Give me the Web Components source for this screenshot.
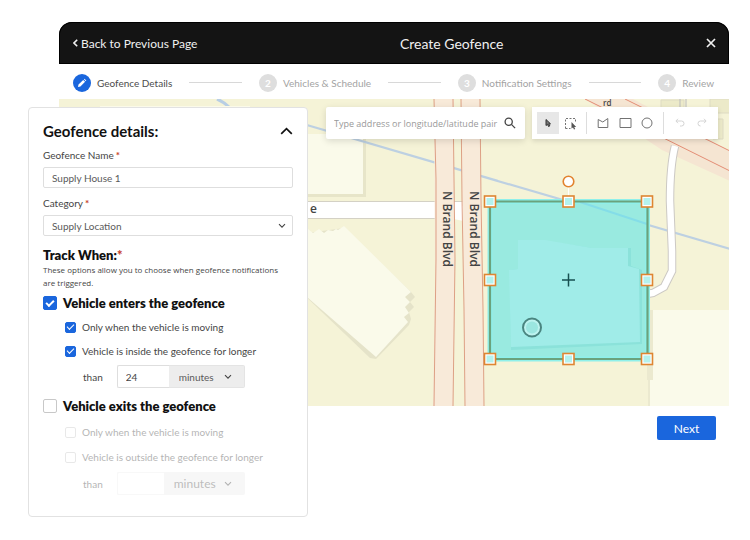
<!DOCTYPE html>
<html lang="en">
<head>
<meta charset="utf-8">
<meta name="viewport" content="width=device-width, initial-scale=1">
<title>Create Geofence</title>
<style>
  :root {
    --blue: #1a66dd;
    --ink: #454545;
    --muted: #a3a3a3;
    --line: #dedede;
    --red: #c8411f;
  }
  body { margin: 0; background: #fff; color: var(--ink); font-family: Lato, "Open Sans", sans-serif; font-size: 10px; }
</style>
</head>
<body>
<geofence-page></geofence-page>

<script>
const BASE = `<style>
  *, *::before { box-sizing: border-box; }
  input, select, button { font: inherit; color: inherit; margin: 0; }
  button { padding: 0; border: 0; background: none; cursor: pointer; }
  svg { display: block; fill: none; stroke: currentColor; }
</style>`;

function define(name, markup) {
  const template = document.createElement('template');
  customElements.define(name, class extends HTMLElement {
    constructor() {
      super();
      template.innerHTML = BASE + (typeof markup === 'function' ? markup(this) : markup);
      this.attachShadow({ mode: 'open' }).append(template.content.cloneNode(true));
    }
  });
}

define('page-header', `
<style>
  :host { display: flex; align-items: center; justify-content: space-between; height: 42px; padding: 0 13px 0 14px;
    background: #141414; color: #f0f0f0; border-radius: 13px 13px 0 0; box-shadow: inset 0 0 0 1px #000; }
  a { display: flex; align-items: center; gap: 3px; color: inherit; text-decoration: none; font-size: 12px; }
  h1 { margin: 0; font-size: 14px; font-weight: 400; }
</style>
<a href="#back"><svg width="5" height="8" viewBox="0 0 5 8" stroke-width="1.6"><path d="M4.2.8 1 4l3.2 3.2"/></svg>Back to Previous Page</a>
<h1>Create Geofence</h1>
<button aria-label="Close"><svg width="10" height="10" viewBox="0 0 10 10" stroke-width="1.7"><path d="m1 1 8 8M9 1 1 9"/></svg></button>
`);

define('step-item', `
<style>
  :host { display: flex; align-items: center; gap: 6px; color: var(--muted); white-space: nowrap; }
  :host([current]) { color: #4c4c4c; }
  .dot { display: grid; place-items: center; width: 18px; height: 18px; border-radius: 50%; background: #dedede; color: #fff; font-weight: 700; }
  :host([current]) .dot { background: var(--blue); }
</style>
<span class="dot"><slot name="mark"></slot></span><slot></slot>
`);

define('step-track', `
<style>
  :host { display: flex; align-items: center; gap: 17px; height: 35px; padding: 2px 15px 0 14px; background: #fff; }
  i { flex: 1; height: 1px; background: #d8d8d8; }
</style>
<step-item current><svg slot="mark" width="10" height="10" viewBox="0 0 10 10"><path d="M1 9l.5-2.4L6.2 1.9l1.9 1.9-4.7 4.7zM6.9 1.3l.6-.5 1.8 1.7-.6.7z" fill="#fff" stroke="none"/></svg>Geofence Details</step-item>
<i></i>
<step-item><span slot="mark">2</span>Vehicles &amp; Schedule</step-item>
<i></i>
<step-item><span slot="mark">3</span>Notification Settings</step-item>
<i></i>
<step-item><span slot="mark">4</span>Review</step-item>
`);

const handle = (x, y) => `<rect x="${x - 5.5}" y="${y - 5.5}" width="11" height="11" fill="#fff" stroke="#de8632" stroke-width="1.6"/><rect x="${x - 3.5}" y="${y - 3.5}" width="7" height="7" fill="#b4f2ee" stroke="none"/>`;

define('geofence-map', `
<style>
  :host { display: block; background: #f5f3d7; overflow: hidden; }
  svg { width: 100%; height: 100%; stroke: none; }
  text { fill: #444; font: 600 12px "Open Sans", sans-serif; }
  .small { font-size: 8px; }
</style>
<svg viewBox="59 99 670 307" preserveAspectRatio="xMaxYMin slice" role="img" aria-label="Map">
  <path d="M217 99q7 3 12 8" stroke="#b8cee4" stroke-width="3"/>
  <path d="M100 106h150v10H100z" fill="#fbfae9"/>
  <path d="M300 134h66v63h-66z" fill="#e7e5c9"/>
  <path d="M300 134h63v60h-63z" fill="#fafaea"/>
  <path d="M300 123 730 249" stroke="#bdd0e2" stroke-width="2.2"/>
  <path d="M300 234l44-6 67 64 4 5-5 5 4 5-5 5 2 7-2 6-33 34-6-1-70-67z" fill="#e5e3c9"/>
  <path d="M300 235l8-6 5 4 6-4 5 4 4-3 5 1 3-2 2 1 6-4 67 66-6 5 5 5-5 5 4 6-5 4 4 5-32 35-76-66z" fill="#fafaea"/>
  <path d="M300 201.5H465v17H300z" fill="#fff" stroke="#d4d1c5"/>
  <path d="M434 99h20v110l1 70-2 127h-20l2-127z" fill="#f8ead9"/>
  <path d="M461 99h19l1 100 2 110 1 97h-19l-1-110-2-110z" fill="#f8ead9"/>
  <path d="M454 204l9 2v15l-9-2z" fill="#fff"/>
  <path d="M434 99l2 80v80l-2 147M453 99l1 80 1 80-2 147M461 99l1 100 2 110 1 97M480 99l1 100 2 110 1 97" fill="none" stroke="#dda085"/>
  <path d="M585 99h48l97 52v30l-68-31z" fill="#f5e5d2"/>
  <path d="M585 99 730 171M625 99 730 151" stroke="#e38d75"/>
  <path d="M661 100h23v25h-23zM710 99h20v14h-20zM713 119h10v20h-10z" fill="#eceac9" stroke="#dedbc3"/>
  <path d="M680 99v10M686 99v10" stroke="#bbb"/>
  <path d="M675 146q-5 20-5 55l2 50v20l-8 16-11 6-12 2" fill="none" stroke="#ccc9c4" stroke-width="8.5"/>
  <path d="M675 146q-5 20-5 55l2 50v20l-8 16-11 6-12 2" fill="none" stroke="#fff" stroke-width="6.5"/>
  <path d="M648 406v-26h-1v-70h84v97z" fill="#ebe9cf"/>
  <path d="M650 406v-26h3V310h78v96z" fill="#fafaea"/>
  <text class="small" x="603" y="106">rd</text>
  <text x="310" y="213">e</text>
  <text transform="translate(443 191) rotate(90)">N Brand Blvd</text>
  <text transform="translate(470 191) rotate(90)">N Brand Blvd</text>

  <path d="M490 201.5h157.500v157.500H490z" fill="#99eae0" stroke="#8ff0ea" stroke-width="5"/>
  <path d="M511 350l-1-80 8-1v-27l28-1 46 7 39 0v18l11 4v74z" fill="#8be2da"/>
  <path d="M511 347l-2-77 9-1v-29h27l47 8h36v18l11 3 1 73z" fill="#a0ece8"/>
  <path d="M580 202l67 22" stroke="#84dde8" stroke-width="2"/>
  <path d="M490 201.500h157.500v157.500H490z" fill="none" stroke="#6ba27c" stroke-width="2.200"/>
  <path d="M568.500 187v9" stroke="#fff"/>
  <circle cx="568.500" cy="181.500" r="5.300" fill="#fff" stroke="#e28330" stroke-width="1.600"/>
  ${[[490,201.5],[568.5,201.5],[647,201.5],[490,280],[647,280],[490,359],[568.5,359],[647,359]].map(p => handle(...p)).join('')}
  <path d="M568.500 273.500v13M562 280h13" stroke="#174f50" stroke-width="1.500"/>
  <circle cx="532" cy="327.500" r="9" fill="#bdf3ef" stroke="#4a8580" stroke-width="2"/>
  <circle cx="532" cy="327.500" r="6" fill="#9be6e0"/>
</svg>
`);

define('map-search', `
<style>
  :host { display: flex; align-items: center; width: 199px; height: 32px; padding: 0 9px 0 8px; background: #fff; border-radius: 2px; box-shadow: 0 2px 7px #0002; }
  input { flex: 1; min-width: 0; border: 0; padding: 0; outline: 0; background: none; font: 9px "Open Sans", sans-serif; }
  input::placeholder { color: #999; opacity: 1; }
  button { color: #444; }
</style>
<input type="text" aria-label="Search address" placeholder="Type address or longitude/latitude pair">
<button aria-label="Search"><svg width="12" height="12" viewBox="0 0 12 12" stroke-width="1.3"><circle cx="4.700" cy="4.700" r="3.600"/><path d="m7.400 7.400 3.700 3.700"/></svg></button>
`);

define('map-toolbar', `
<style>
  :host { display: flex; align-items: center; height: 32px; padding: 0 5px; background: #fff; box-shadow: 0 2px 5px #0002; color: #727272; }
  button { display: grid; place-items: center; width: 22px; height: 22px; }
  button[aria-pressed=true] { background: #e7e7e7; color: #333; }
  button:disabled { color: #d4d4d4; }
  i { width: 1px; height: 22px; margin: 0 5px; background: #ddd; }
</style>
<button aria-label="Select" aria-pressed="true"><svg width="12" height="12" viewBox="0 0 12 12"><path d="M4 2.500v6l1.500-1.200 1 2.200 1.300-.6-1-2.100H8.500z" fill="#777" stroke="#333"/></svg></button>
<button aria-label="Select area"><svg width="13" height="13" viewBox="0 0 13 13"><path d="M1.500 11.500v-10h10v4M1.500 11.500h5" stroke-dasharray="2 1.500"/><path d="M7.500 5v6.500l1.500-1 1 2 1.200-.6-1-1.900h2z" fill="#555" stroke="none"/></svg></button>
<i></i>
<button aria-label="Draw polygon"><svg width="12" height="12" viewBox="0 0 12 12"><path d="M1.200 2.500 5.800 5l5-3.500v9H1.200z"/></svg></button>
<button aria-label="Draw rectangle"><svg width="13" height="12" viewBox="0 0 13 12"><path d="M1 1.500h11v9H1z"/></svg></button>
<button aria-label="Draw circle"><svg width="12" height="12" viewBox="0 0 12 12"><circle cx="6" cy="6" r="5"/></svg></button>
<i></i>
<button aria-label="Undo" disabled><svg width="10" height="10" viewBox="0 0 10 10"><path d="M3 .8.900 3 3 5.200M1 3h5.500q2.500 0 2.500 2.500T6.500 8H5"/></svg></button>
<button aria-label="Redo" disabled><svg width="10" height="10" viewBox="0 0 10 10"><path d="M7 .8 9.100 3 7 5.200M9 3H3.500Q1 3 1 5.500T3.500 8"/></svg></button>
`);

const chevron = '<svg width="8" height="6" viewBox="0 0 8 6" stroke-width="1.1"><path d="m1 1.200 3 3 3-3"/></svg>';

define('form-field', el => `
<style>
  :host { display: block; }
  label { display: grid; gap: 4px; line-height: 16px; }
  b { color: var(--red); margin-left: 2px; }
  .control { display: grid; align-items: center; }
  input, select { grid-area: 1 / 1; appearance: none; width: 100%; height: 21px; padding: 0 8px; border: 1px solid var(--line); border-radius: 2px; background: #fff; color: #5a5a5a; }
  svg { grid-area: 1 / 1; justify-self: end; margin-right: 7px; pointer-events: none; }
</style>
<label><span>${el.getAttribute('label')}<b>*</b></span>
<span class="control">${el.hasAttribute('choice')
  ? `<select><option>${el.getAttribute('value')}</option></select>${chevron}`
  : `<input type="text" value="${el.getAttribute('value')}">`}</span></label>
`);

define('check-row', el => `
<style>
  :host { display: block; }
  label { display: flex; align-items: center; gap: 6px; height: 20px; padding-left: 22px; white-space: nowrap; }
  input { appearance: none; display: grid; place-items: center; flex: none; width: 11px; height: 11px; border: 1px solid #c8c8c8; border-radius: 2px; background: #fff; }
  input:checked { border-color: var(--blue); background: var(--blue); }
  input:checked::before { content: ""; width: 7px; height: 4px; margin-bottom: 2px; border: solid #fff; border-width: 0 0 1px 1px; rotate: -45deg; }
  :host([major]) label { padding: 0; font-size: 13px; font-weight: 800; color: #111; }
  :host([major]) input { width: 14px; height: 14px; }
  :host([major]) input:checked::before { width: 8px; height: 5px; border-width: 0 0 2px 2px; }
</style>
<label><input type="checkbox" ${el.hasAttribute('on') ? 'checked' : ''} ${el.hasAttribute('off') ? 'disabled' : ''}><slot></slot></label>
`);

define('duration-row', el => `
<style>
  :host { display: flex; align-items: center; height: 23px; padding-left: 40px; }
  label { display: flex; align-items: center; gap: 14px; }
  input { width: 52px; height: 23px; padding: 0 8px; border: 1px solid var(--line); border-right: 0; border-radius: 2px 0 0 2px; background: #fff; }
  .unit { display: grid; align-items: center; width: 76px; }
  select { grid-area: 1 / 1; appearance: none; height: 23px; padding: 0 10px; border: 1px solid #e4e4e4; border-left: 0; border-radius: 0 2px 2px 0; background: #ededed; color: #5a5a5a; opacity: 1; }
  svg { grid-area: 1 / 1; justify-self: end; margin-right: 13px; pointer-events: none; }
  :host([off]) input { width: 47px; border-color: #eee; }
  :host([off]) .unit { width: 81px; font-size: 12px; }
  :host([off]) select { border-color: #ededed; }
</style>
<label>than <input type="text" inputmode="numeric" value="${el.getAttribute('value') || ''}" ${el.hasAttribute('off') ? 'disabled' : ''}></label>
<span class="unit"><select aria-label="Unit" ${el.hasAttribute('off') ? 'disabled' : ''}><option>minutes</option></select>${chevron}</span>
`);

define('details-panel', `
<style>
  :host { display: block; padding: 10px 14px 21px; background: #fff; border: 1px solid #e2e2e2; border-radius: 4px; }
  header { display: flex; align-items: center; justify-content: space-between; height: 26px; margin-bottom: 3px; color: #111; }
  h2 { margin: 0; font-size: 15px; font-weight: 700; }
  form-field + form-field { margin-top: 7px; }
  h3 { margin: 11px 0 0; font-size: 13px; line-height: 16px; font-weight: 800; color: #111; }
  h3 b { color: var(--red); }
  p { margin: 0 0 4px; padding-right: 8px; font: 8px/13px "Open Sans", sans-serif; }
  section { display: grid; gap: 4px; }
  section + section { margin-top: 8px; gap: 6px; }
  .faded { display: grid; gap: 5px; opacity: .4; }
</style>
<header><h2>Geofence details:</h2><button aria-label="Collapse"><svg width="13" height="8" viewBox="0 0 13 8" stroke-width="1.700"><path d="m1.200 6.800 5.300-5.200 5.300 5.200"/></svg></button></header>
<form-field label="Geofence Name" value="Supply House 1"></form-field>
<form-field label="Category" value="Supply Location" choice></form-field>
<h3>Track When:<b>*</b></h3>
<p>These options allow you to choose when geofence notifications are triggered.</p>
<section>
  <check-row major on>Vehicle enters the geofence</check-row>
  <check-row on>Only when the vehicle is moving</check-row>
  <check-row on>Vehicle is inside the geofence for longer</check-row>
  <duration-row value="24"></duration-row>
</section>
<section>
  <check-row major>Vehicle exits the geofence</check-row>
  <div class="faded">
    <check-row off>Only when the vehicle is moving</check-row>
    <check-row off>Vehicle is outside the geofence for longer</check-row>
    <duration-row off></duration-row>
  </div>
</section>
`);

define('geofence-page', `
<style>
  :host { display: block; padding: 22px 21px 22px 59px; }
  .stage { display: grid; grid-template: minmax(307px, auto) auto / 249px 1fr; }
  geofence-map { grid-area: 1 / 1 / 2 / 3; height: 307px; }
  details-panel { grid-area: 1 / 1 / 3 / 2; margin: 8px 0 0 -31px; z-index: 1; }
  .tools { grid-area: 1 / 2; z-index: 1; display: flex; justify-content: end; align-items: start; gap: 7px; padding: 8px 11px 0 0; }
  footer { grid-area: 2 / 2; display: flex; justify-content: end; align-items: start; padding: 10px 13px 0 0; }
  .next { width: 59px; height: 24px; border-radius: 2px; background: var(--blue); color: #fff; font-size: 12px; }
</style>
<page-header></page-header>
<step-track></step-track>
<div class="stage">
  <geofence-map></geofence-map>
  <details-panel></details-panel>
  <div class="tools"><map-search></map-search><map-toolbar></map-toolbar></div>
  <footer><button class="next">Next</button></footer>
</div>
`);
</script>
</body>
</html>
